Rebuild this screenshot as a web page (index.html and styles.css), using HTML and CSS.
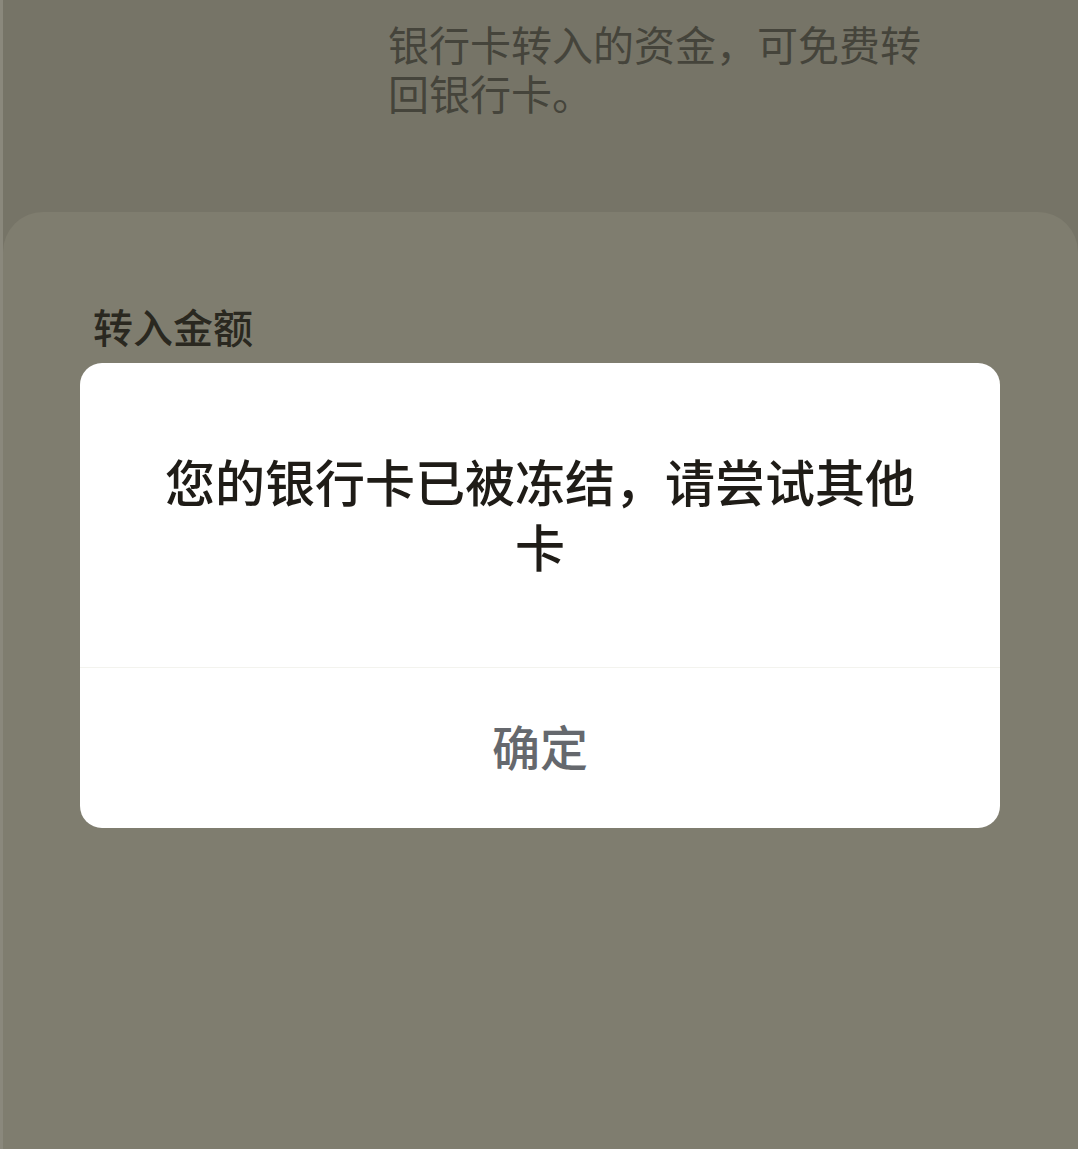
FILE: index.html
```html
<!DOCTYPE html>
<html lang="zh-CN">
<head>
<meta charset="utf-8">
<title>转入</title>
<link rel="stylesheet" href="styles.css">
</head>
<body>
<div class="page">
  <div class="top">
    <p class="hint">银行卡转入的资金，可免费转<br>回银行卡。</p>
  </div>
  <div class="panel">
    <div class="label">转入金额</div>
  </div>
</div>
<div class="dialog">
  <div class="msg">您的银行卡已被冻结，请尝试其他卡</div>
  <div class="btn">确定</div>
</div>
</body>
</html>
```
FILE: styles.css
```css
html, body {
  margin: 0;
  padding: 0;
  height: 100%;
}
body {
  background: #767467;
  font-family: "Noto Sans CJK SC", "Noto Sans", sans-serif;
  position: relative;
  overflow: hidden;
}
.page {
  display: flex;
  flex-direction: column;
  height: 1149px;
  border-left: 3px solid #8a887c;
  box-sizing: border-box;
}
.top {
  height: 212px;
  box-sizing: border-box;
  padding: 19px 0 0 385px;
}
.hint {
  margin: 0;
  font-size: 41px;
  line-height: 49px;
  color: #45443b;
}
.panel {
  flex: 1;
  background: #7f7d6f;
  border-radius: 40px 40px 0 0;
  padding: 89px 0 0 90px;
}
.label {
  font-size: 40px;
  line-height: 50px;
  color: #2a2820;
  font-weight: 500;
}
.dialog {
  position: absolute;
  left: 80px;
  top: 363px;
  width: 920px;
  height: 465px;
  background: #ffffff;
  border-radius: 22px;
  display: flex;
  flex-direction: column;
  overflow: hidden;
}
.msg {
  height: 305px;
  box-sizing: border-box;
  padding: 0 80px 4px;
  display: flex;
  align-items: center;
  justify-content: center;
  text-align: center;
  font-size: 50px;
  line-height: 65px;
  font-weight: 500;
  color: #1f1c17;
  border-bottom: 1px solid #f3f3ee;
}
.btn {
  flex: 1;
  display: flex;
  align-items: center;
  justify-content: center;
  padding-bottom: 6px;
  font-size: 48px;
  font-weight: 500;
  color: #65686d;
}
```
